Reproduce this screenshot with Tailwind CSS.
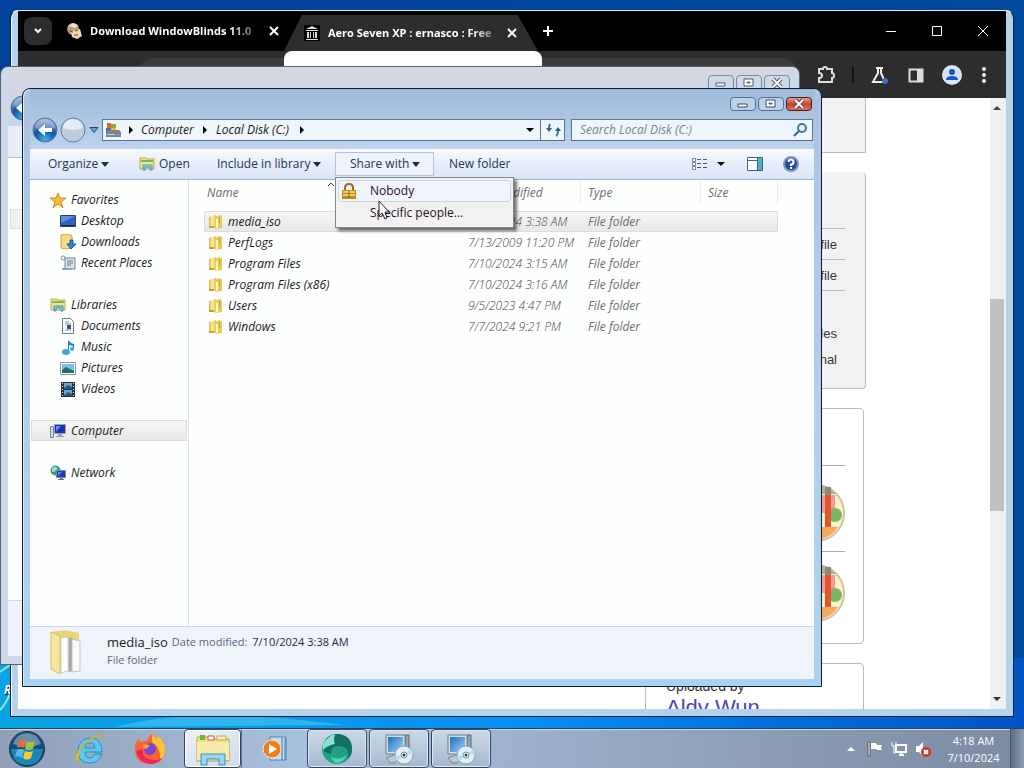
<!DOCTYPE html>
<html lang="en">
<head>
<meta charset="UTF-8">
<meta name="viewport" content="width=device-width, initial-scale=1.0">
<title>Local Disk (C:)</title>
<script src="https://cdn.jsdelivr.net/npm/@tailwindcss/browser@4"></script>
</head>
<body class="relative h-screen overflow-hidden bg-gradient-to-r from-[#00419b] to-[#00499c] font-['Open_Sans',sans-serif] text-xs text-[#1a1a1a]">

<!-- shared icons -->
<svg class="absolute size-0">
  <defs>
    <linearGradient id="fold" x1="0" x2="1"><stop offset="0" stop-color="#d9b23b"/><stop offset=".45" stop-color="#fbf0a8"/><stop offset="1" stop-color="#e2c04c"/></linearGradient>
    <linearGradient id="screen" x1="0" y1="0" x2="1" y2="1"><stop offset="0" stop-color="#1c6fc0"/><stop offset="1" stop-color="#9fd4f5"/></linearGradient>
    <radialGradient id="orb" cx=".5" cy=".9" r=".9"><stop offset="0" stop-color="#3fb4ee"/><stop offset=".5" stop-color="#16509e"/><stop offset="1" stop-color="#9bb4d4"/></radialGradient>
    <symbol id="folder" viewBox="0 0 16 16">
      <path d="M1 3l7-2v13l-7-1z" fill="url(#fold)"/>
      <path d="M7 3l4-2 3 1v12l-7 1z" fill="#e8cc5a"/>
      <path d="M8 5h2v9H8z" fill="#fdf6c6"/>
      <path d="M11 3h1v6h-1zM1 12h5v2H1z" fill="#caa02c"/>
    </symbol>
    <symbol id="library" viewBox="0 0 16 16">
      <path d="M1 2h6l1 1h7v10H1z" fill="#f3e48c" stroke="#c3ab49"/>
      <path d="M2 5h12" stroke="#7eb554" stroke-width="2"/>
      <path d="M4 14V9h9v5h-2v-3H6v3z" fill="#8fd4ee" stroke="#3f93bd"/>
    </symbol>
    <symbol id="back" viewBox="0 0 26 26">
      <circle cx="13" cy="13" r="12" fill="url(#orb)" stroke="#53708f"/>
      <path d="M3 11a10 9 0 0 1 20 0q-10 4-20 0z" fill="#fff" opacity=".3"/>
      <path d="M6 13l7-6v4h7v4h-7v4z" fill="#fff"/>
    </symbol>
    <symbol id="installer" viewBox="0 0 32 32">
      <path d="M22 2h4v20h-4z" fill="#9aa3a8" stroke="#596872"/>
      <path d="M3 2h19v19H3z" fill="#d5e0e7" stroke="#6d7d89"/>
      <path d="M5 4h15v15H5z" fill="url(#screen)"/>
      <path d="M3 25l8-3 5 2-4 6H7z" fill="#bcc7cf" stroke="#76848e"/>
      <circle cx="21" cy="22" r="9" fill="#dfeffa" stroke="#8aa5b8"/>
      <path d="M21 22l7-6a9 9 0 0 1 2 5zM21 22l-7 6a9 9 0 0 1-2-5z" fill="#b4e0f0"/>
      <circle cx="21" cy="22" r="3" fill="#fff" stroke="#78909e"/><circle cx="21" cy="22" r="1.500" fill="#333"/>
    </symbol>
    <symbol id="avatar" viewBox="1 1 58 58">
      <circle cx="30" cy="30" r="28" fill="#fdf3c0" stroke="#c9c4b0" stroke-width="2"/>
      <path d="M30 2a28 28 0 0 1 20 9H24z" fill="#a9b2a0"/>
      <path d="M34 12h15v18H34z" fill="#f49a9a"/>
      <path d="M34 44h18q-6 10-20 13z" fill="#f2a95a"/>
      <circle cx="49" cy="32" r="7" fill="#79b765"/>
      <path d="M39 4h6v8h-6z" fill="#8d8a72"/>
      <path d="M39 12h6v32h-6z" fill="#e35436"/>
    </symbol>
  </defs>
</svg>

<!-- lower part of the wallpaper -->
<div class="absolute inset-x-0 bottom-0 h-[110px] bg-gradient-to-r from-[#08a3e2] via-[#0a90f5] to-[#0352c4]"></div>
<svg class="absolute bottom-10 left-0 h-16 w-full" viewBox="0 0 1024 64" preserveAspectRatio="none"><path d="M0 8q8-6 12-8M0 46q5-5 10-16" stroke="#8fe3e8" stroke-width="2" fill="none"/><path d="M115 63q80-22 230-2" fill="#2fb4ec"/></svg>
<span class="absolute bottom-[70px] left-1 font-bold italic text-white [text-shadow:1px_1px_1px_#000]">R</span>

<!-- browser -->
<section class="absolute top-[10px] right-[10px] bottom-[51px] left-[10px] flex flex-col rounded-t-lg border border-[#07223a] border-t-[#dceaf5] bg-[#b4d2ec] px-[7px] pb-[7px] shadow-[inset_1px_0_#fff]">
  <header class="flex h-10 shrink-0 items-center bg-black text-white">
    <button aria-label="Search tabs" class="ml-1.5 grid size-7 place-items-center rounded-lg bg-[#2d2d2d]">
      <svg class="size-4" viewBox="0 0 16 16"><path d="M5 6l3 3 3-3" stroke="#fff" stroke-width="2" fill="none"/></svg>
    </button>
    <div class="ml-3.5 flex w-[218px] items-center">
      <svg class="size-4 shrink-0" viewBox="0 0 16 16"><circle cx="7" cy="6" r="6" fill="#b9997c"/><path d="M2 3l5-3 5 2-2 3z" fill="#e9e2d2"/><path d="M5 8l9-2 2 7-5 3-5-2z" fill="#f1d9ad"/><path d="M4 8l3 1M9 8l3-1M8 12h4" stroke="#684a32"/></svg>
      <span class="ml-2 w-[166px] text-[11px] font-bold whitespace-nowrap [mask-image:linear-gradient(to_right,#000_84%,#0004)]">Download WindowBlinds 11.0</span>
      <button aria-label="Close tab" class="ml-3"><svg class="size-3" viewBox="0 0 12 12"><path d="M2 2l8 8M10 2l-8 8" stroke="#fff" stroke-width="2"/></svg></button>
    </div>
    <div class="mt-1 flex h-9 w-[254px] items-center bg-[#2d2d2d] pl-5 [clip-path:polygon(7%_0,92%_0,100%_100%,0_100%)]">
      <svg class="size-4 shrink-0 bg-black" viewBox="0 0 16 16"><path d="M2 4l6-3 6 3zM2 5h12v1H2zM3 7h2v6H3zM6 7h1v6H6zM9 7h1v6H9zM11 7h2v6h-2zM2 14h12v1H2z" fill="#ddd"/></svg>
      <span class="ml-2 w-[166px] text-[11px] font-bold whitespace-nowrap [mask-image:linear-gradient(to_right,#000_88%,#0004)]">Aero Seven XP : ernasco : Free</span>
      <button aria-label="Close tab" class="ml-3"><svg class="size-3" viewBox="0 0 12 12"><path d="M2 2l8 8M10 2l-8 8" stroke="#fff" stroke-width="2"/></svg></button>
    </div>
    <button aria-label="New tab" class="ml-1"><svg class="size-3" viewBox="0 0 12 12"><path d="M6 1v10M1 6h10" stroke="#fff" stroke-width="2"/></svg></button>
    <div class="mr-[17px] ml-auto flex gap-[34px]">
      <button aria-label="Minimize"><svg class="size-3" viewBox="0 0 12 12"><path d="M1 6.500h10" stroke="#fff"/></svg></button>
      <button aria-label="Maximize"><svg class="size-3" viewBox="0 0 12 12"><path d="M1.500 1.500h9v9h-9z" stroke="#fff" fill="none"/></svg></button>
      <button aria-label="Close"><svg class="size-3" viewBox="0 0 12 12"><path d="M1 1l10 10M11 1L1 11" stroke="#fff"/></svg></button>
    </div>
  </header>
  <div class="relative flex h-[47px] shrink-0 items-center justify-end bg-[#2d2d2d] pr-3">
    <div class="absolute top-[7px] left-[120px] h-8 w-[660px] rounded-full bg-[#3c3c3c]"></div>
    <div class="absolute top-0 left-[266px] h-10 w-[258px] rounded-t-lg bg-white"></div>
    <div class="flex items-center">
      <button aria-label="Extensions"><svg class="size-5" viewBox="0 0 20 20"><path d="M3 4h4q0-2 2-2t2 2h5v4q2 0 2 2.500T16 13v4H3v-4q3 0 3-2.500T3 8z" stroke="#ddd" stroke-width="2" fill="none"/></svg></button>
      <span class="mx-4 h-4 w-0.5 bg-[#111]"></span>
      <button aria-label="Experiments" class="mr-4"><svg class="size-5" viewBox="0 0 20 20"><path d="M6 3h7M8 3v5l-5 9h12l-4-9V3" stroke="#eee" stroke-width="2" fill="none"/><circle cx="15" cy="16" r="3" fill="#3f6fc4"/></svg></button>
      <button aria-label="Side panel" class="mr-4"><svg class="size-5" viewBox="0 0 20 20"><path d="M3.500 4.500h13v12h-13z" stroke="#ddd" stroke-width="2" fill="none"/><path d="M11 4h6v13h-6z" fill="#ddd"/></svg></button>
      <button aria-label="Profile" class="mr-3"><svg class="size-5" viewBox="0 0 20 20"><circle cx="10" cy="10" r="10" fill="#d6e4fc"/><circle cx="10" cy="7" r="3" fill="#1a56c8"/><path d="M4 15q0-4 6-4t6 4z" fill="#1a56c8"/></svg></button>
      <button aria-label="Menu"><svg class="h-5 w-5" viewBox="0 0 20 20"><circle cx="10" cy="4" r="2" fill="#eee"/><circle cx="10" cy="10" r="2" fill="#eee"/><circle cx="10" cy="16" r="2" fill="#eee"/></svg></button>
    </div>
  </div>
  <main class="flex min-h-0 flex-1 overflow-hidden bg-white font-['Liberation_Sans',sans-serif] text-[13px] text-[#333]">
    <div class="mr-[124px] ml-auto flex w-[221px] flex-col gap-[19px]">
      <div class="h-[55px] shrink-0 border-r border-b border-[#bbb] bg-[#f2f2f2]"></div>
      <div class="h-[217px] shrink-0 rounded border-r border-b border-[#bbb] bg-[#f2f2f2] px-5 pt-14 text-right">
        <p class="h-[31px] border-t border-[#bbb] pr-2 leading-8">1 file</p>
        <p class="h-[31px] border-t border-[#bbb] pr-2 leading-8">1 file</p>
        <p class="border-t border-[#bbb] pt-[30px] pr-2 leading-[26px]">7 Files</p>
        <p class="pr-2 leading-[26px]">6 Original</p>
      </div>
      <div class="mr-0.5 h-[236px] shrink-0 rounded border border-[#bbb] pr-[18px] pl-5 pt-14">
        <div class="border-t border-[#aaa] pt-[18px] pb-[9px]"><svg class="ml-auto size-[58px]"><use href="#avatar"/></svg></div>
        <div class="border-t border-[#aaa] pt-3"><svg class="ml-auto size-[58px]"><use href="#avatar"/></svg></div>
      </div>
      <div class="mr-0.5 flex-1 rounded-t border border-[#bbb] px-5 pt-3">
        <p class="text-sm leading-5">Uploaded by</p>
        <a href="#" class="block text-[22px] leading-6 text-[#4b45b5]">Aldy Wun</a>
      </div>
    </div>
    <div class="flex w-4 flex-col items-center bg-[#f0f0f0] pr-0.5">
      <svg class="my-1 size-3" viewBox="0 0 12 12"><path d="M2 8h8L6 4z" fill="#444"/></svg>
      <div class="mt-[181px] h-[212px] w-3.5 bg-[#c0c0c0]"></div>
      <svg class="mt-auto mb-1 size-3" viewBox="0 0 12 12"><path d="M2 4h8L6 8z" fill="#333"/></svg>
    </div>
  </main>
</section>

<!-- explorer window in the back -->
<section class="absolute top-[66px] left-0 flex h-[599px] w-[800px] flex-col rounded-t-lg border border-[#56616e] bg-gradient-to-r from-[#ccd9e8] to-[#c9d9ea] px-[7px] pb-2">
  <header class="h-[59px] shrink-0 bg-gradient-to-b from-[#d7d6e0] to-[#c6d8ea]">
    <div class="flex justify-end gap-0.5 pt-2 pr-0.5">
      <button aria-label="Minimize" class="grid h-4 w-[26px] place-items-center rounded-sm border border-[#7c8998] bg-[#cbdaea]"><svg class="h-3 w-4" viewBox="0 0 16 12"><path d="M3 6h9v3H3z" fill="#fff" stroke="#4c5868"/></svg></button>
      <button aria-label="Maximize" class="grid h-4 w-[26px] place-items-center rounded-sm border border-[#7c8998] bg-[#cbdaea]"><svg class="h-3 w-4" viewBox="0 0 16 12"><path d="M3 2h9v7H3zM6 5h3v1H6z" fill="#fff" stroke="#4c5868"/></svg></button>
      <button aria-label="Close" class="grid h-4 w-[26px] place-items-center rounded-sm border border-[#7c8998] bg-[#cbdaea]"><svg class="h-3 w-4" viewBox="0 0 16 12"><path d="M4 2l8 8M12 2l-8 8" stroke="#4c5868" stroke-width="4"/><path d="M4 2l8 8M12 2l-8 8" stroke="#fff" stroke-width="2"/></svg></button>
    </div>
    <svg class="mt-1 ml-0.5 size-[26px]"><use href="#back"/></svg>
  </header>
  <div class="h-8 shrink-0 border-b border-[#b4bfcc] bg-[#e8eef8]"></div>
  <div class="flex-1 bg-white pt-[51px]"><div class="ml-0.5 h-5 border border-[#ddd] bg-[#f1f1f1]"></div></div>
  <div class="h-14 shrink-0 border-t border-[#ccd6e4] bg-[#eef2fb]"></div>
</section>

<!-- explorer window -->
<section class="absolute top-[88px] left-[22px] flex h-[599px] w-[800px] flex-col rounded-t-lg border border-[#0b1c2c] bg-gradient-to-b from-[#a9c3e0] via-[#b5cdea] to-[#a9d2f0] px-[7px] pb-[7px] shadow-[inset_1px_1px_#dcebf8]">
  <header class="shrink-0 bg-gradient-to-b from-[#9dbad8] to-[#bdd2ec] pt-2">
    <div class="flex justify-end gap-0.5 pr-0.5">
      <button aria-label="Minimize" class="grid h-3.5 w-[26px] place-items-center rounded-sm border border-[#53708f] bg-[#bcd1e8]"><svg class="h-3 w-4" viewBox="0 0 16 12"><path d="M3 6h9v3H3z" fill="#fff" stroke="#3c4c60"/></svg></button>
      <button aria-label="Maximize" class="grid h-3.5 w-[26px] place-items-center rounded-sm border border-[#53708f] bg-[#bcd1e8]"><svg class="h-3 w-4" viewBox="0 0 16 12"><path d="M3 2h9v7H3zM6 5h3v1H6z" fill="#fff" stroke="#3c4c60"/></svg></button>
      <button aria-label="Close" class="grid h-3.5 w-[26px] place-items-center rounded-sm border border-[#4c1a18] bg-gradient-to-b from-[#e3a191] via-[#c9402a] to-[#dd7359]"><svg class="h-3 w-4" viewBox="0 0 16 12"><path d="M4 2l8 8M12 2l-8 8" stroke="#5b4444" stroke-width="4"/><path d="M4 2l8 8M12 2l-8 8" stroke="#fff" stroke-width="2"/></svg></button>
    </div>
    <div class="flex h-[38px] items-center pr-px pl-0.5">
      <button aria-label="Back"><svg class="size-[26px]"><use href="#back"/></svg></button>
      <button aria-label="Forward" class="ml-0.5"><svg class="size-[26px]" viewBox="0 0 26 26"><circle cx="13" cy="13" r="12" fill="#bccde0" stroke="#667f9d"/><path d="M3 11a10 9 0 0 1 20 0q-10 4-20 0z" fill="#e4edf6"/></svg></button>
      <button aria-label="Recent pages" class="ml-0.5"><svg class="h-2 w-3" viewBox="0 0 12 8"><path d="M2 1.500h8L6 6.500z" fill="#6fa7c8" stroke="#1c4a72"/></svg></button>
      <div class="ml-0.5 flex h-[22px] w-[463px] items-center border border-[#5b7590] bg-[#eef5fb] italic">
        <svg class="ml-0.5 size-4" viewBox="0 0 16 16"><path d="M2 1h4v5H2z" fill="#e2612e"/><path d="M6 2h5v5H6z" fill="#88b440"/><path d="M1 6h5v4H1z" fill="#3973c4"/><path d="M6 6h5v4H6z" fill="#eebd31"/><path d="M1 10l2-2h11l2 2v5H1z" fill="#7b8894"/><path d="M2 12h8v1H2z" fill="#cfd8df"/><path d="M12 12h2v1h-2z" fill="#61d43c"/></svg>
        <svg class="mx-1 size-3" viewBox="0 0 12 12"><path d="M4 2l4 4-4 4z"/></svg>
        <a href="#" class="w-[54px]">Computer</a>
        <svg class="mx-1 size-3" viewBox="0 0 12 12"><path d="M4 2l4 4-4 4z"/></svg>
        <a href="#" class="ml-px w-20">Local Disk (C:)</a>
        <svg class="size-3" viewBox="0 0 12 12"><path d="M4 2l4 4-4 4z"/></svg>
        <button aria-label="Previous locations" class="mr-1 ml-auto"><svg class="size-3" viewBox="0 0 12 12"><path d="M2 4h8L6 8z"/></svg></button>
        <button aria-label="Refresh" class="grid h-full w-6 place-items-center border-l border-[#5b7590]"><svg class="size-4" viewBox="0 0 16 16"><path d="M5 2q-1 2-1 5M11 14q2-1 2-6" stroke="#2f7f9e" stroke-width="2" fill="none"/><path d="M1 6h6L4 10zM10 9h6l-3-4z" fill="#2b6292"/></svg></button>
      </div>
      <div class="ml-1.5 flex h-[22px] min-w-0 flex-1 items-center border border-[#5b7590] bg-[#eef5fb] pr-1 pl-2">
        <input type="text" aria-label="Search" placeholder="Search Local Disk (C:)" class="min-w-0 flex-1 italic outline-none placeholder:text-[#7b838c]">
        <svg class="size-4" viewBox="0 0 16 16"><circle cx="10" cy="6" r="4" stroke="#3d7aa8" stroke-width="2" fill="#e3f3fb"/><path d="M7 9l-5 5" stroke="#35648f" stroke-width="2"/></svg>
      </div>
    </div>
  </header>

  <nav class="relative flex h-[31px] shrink-0 items-center border-b border-[#9fb3ce] bg-gradient-to-b from-[#f8fafe] via-[#e6eefb] to-[#d9e5f7] text-[#26364c]">
    <button class="ml-[18px] flex w-[91px] items-center">Organize<svg class="ml-px size-3" viewBox="0 0 12 12"><path d="M2 4h8L6 9z" fill="#222c3a"/></svg></button>
    <button class="flex w-[78px] items-center"><svg class="mr-1 size-4"><use href="#library"/></svg>Open</button>
    <button class="flex w-[118px] items-center whitespace-nowrap">Include in library<svg class="ml-px size-3" viewBox="0 0 12 12"><path d="M2 4h8L6 9z" fill="#222c3a"/></svg></button>
    <button class="flex h-6 w-[99px] items-center border border-[#b3c4de] bg-[#edf2fb] pl-3.5">Share with<svg class="ml-px size-3" viewBox="0 0 12 12"><path d="M2 4h8L6 9z" fill="#222c3a"/></svg></button>
    <button class="ml-[15px]">New folder</button>
    <button aria-label="Views" class="ml-auto flex items-center"><svg class="size-4" viewBox="0 0 16 16"><path d="M1.500 2.500h3v3h-3zM1.500 6.500h3v3h-3zM1.500 10.500h3v3h-3z" fill="#fff" stroke="#75869b"/><path d="M6 3.500h4M12 3.500h4M6 7.500h4M12 7.500h4M6 11.500h4M12 11.500h4" stroke="#4d6079"/></svg><svg class="ml-2 size-3" viewBox="0 0 12 12"><path d="M2 4h8L6 8z" fill="#111"/></svg></button>
    <button aria-label="Preview pane" class="ml-5"><svg class="size-4" viewBox="0 0 16 16"><path d="M.5 1.500h15v13H.5z" fill="#fff" stroke="#44648a"/><path d="M10 2h5v12h-5z" fill="#49b3bd"/><path d="M1 4.500h9M10.500 2v12" stroke="#44648a"/></svg></button>
    <button aria-label="Help" class="mr-[15px] ml-5"><svg class="size-4" viewBox="0 0 16 16"><circle cx="8" cy="8" r="7" fill="#2448a8" stroke="#7f93b4" stroke-width="2"/><path d="M5.500 6q0-2.500 2.500-2.500T10.500 6 8 8.500V10M8 11v2" stroke="#fff" stroke-width="2" fill="none"/></svg></button>

    <!-- share menu -->
    <div class="absolute top-7 left-[305px] z-10 w-[179px] border border-[#7c8794] bg-[#f1f1f1] p-0.5 pb-[3px] text-[#2a1028] shadow-[3px_3px_3px_rgba(0,0,0,.55)]">
      <button class="flex h-[22px] w-full items-center rounded-sm border border-[#c3d6f0] bg-[#f1f5fb] pl-0.5"><svg class="mr-[13px] size-4" viewBox="0 0 16 16"><path d="M4 8V5q0-4 4-4t4 4v3" stroke="#9b6c16" stroke-width="2" fill="none"/><path d="M1 7h14v9H1z" fill="#c28a1b"/><path d="M2 9h12M2 12h12" stroke="#f2cf5b" stroke-width="2"/><path d="M8 8v7" stroke="#8b5a10"/></svg>Nobody</button>
      <button class="flex h-[22px] w-full items-center pl-8">Specific people...</button>
    </div>
    <svg class="absolute top-[51px] left-[348px] z-20 h-5 w-3" viewBox="0 0 12 20"><path d="M1 1v15l3-3 3 6 2-1-2-6h4z" fill="#fff" stroke="#222"/></svg>
  </nav>

  <div class="flex min-h-0 flex-1 bg-[#fdfefe] italic">
    <aside class="w-[159px] shrink-0 border-r border-[#d9e3ef] pt-[9px] [&_a]:flex [&_a]:h-[21px] [&_a]:items-center [&_a]:gap-[5px] [&_svg]:size-4">
      <a href="#" class="pl-5"><svg viewBox="0 0 16 16"><path d="M8 1l2 5h6l-5 4 2 6-5-4-5 4 2-6-5-4h6z" fill="#f6bd3b" stroke="#d28a22"/></svg>Favorites</a>
      <a href="#" class="pl-[30px]"><svg viewBox="0 0 16 16"><path d="M.5 2.500h15v11H.5z" fill="#2c63c4" stroke="#31405c"/><path d="M1 3h14L1 10z" fill="#5b8fe0"/><path d="M1 12h14v1H1z" fill="#16264b"/></svg>Desktop</a>
      <a href="#" class="pl-[30px]"><svg viewBox="0 0 16 16"><path d="M1 1l7-1 4 2v12l-5 1-6-1z" fill="#f3dd87" stroke="#cba63e"/><path d="M10 6h3v4h3l-5 5-4-5h3z" fill="#2d88d8" stroke="#14599f"/></svg>Downloads</a>
      <a href="#" class="pl-[30px]"><svg viewBox="0 0 16 16"><path d="M5 3h10v11H5z" fill="#dbe4e9" stroke="#73858e"/><path d="M7 6h6M7 8h6M7 10h4" stroke="#62808e"/><circle cx="3" cy="3" r="2" fill="#fff" stroke="#7d8f98"/><path d="M2 13h10v2H2z" fill="#7fa9b8"/></svg>Recent Places</a>
      <a href="#" class="mt-[21px] pl-5"><svg><use href="#library"/></svg>Libraries</a>
      <a href="#" class="pl-[30px]"><svg viewBox="0 0 16 16"><path d="M2.500.5h8l3 3v12h-11z" fill="#fff" stroke="#697b88"/><path d="M5 4h4M5 6h6M5 12h6" stroke="#7c93a5"/><path d="M7 7h4v4H7z" fill="#31567c"/></svg>Documents</a>
      <a href="#" class="pl-[30px]"><svg viewBox="0 0 16 16"><path d="M8 1q2 3 6 4v5h-1V7L9 6v6H8z" fill="#1b84bf"/><ellipse cx="6" cy="13" rx="4" ry="3" fill="#37a9dc"/><ellipse cx="12" cy="10" rx="2" ry="2" fill="#37a9dc"/></svg>Music</a>
      <a href="#" class="pl-[30px]"><svg viewBox="0 0 16 16"><path d="M.5 2.500h15v12H.5z" fill="#fff" stroke="#8393a0"/><path d="M2 4h12v9H2z" fill="#79c2dc"/><path d="M2 10l4-3 8 4v2H2z" fill="#246d6b"/></svg>Pictures</a>
      <a href="#" class="pl-[30px]"><svg viewBox="0 0 16 16"><path d="M1 1h14v15H1z" fill="#26333f"/><path d="M4 2h8v6H4zM4 9h8v6H4z" fill="#6ba5cb"/><path d="M4 7l4-3 4 2v2H4zM4 14l4-3 4 2v2H4z" fill="#2a5580"/><path d="M2.500 2v14M13.500 2v14" stroke="#d3dde5" stroke-dasharray="1 2"/></svg>Videos</a>
      <a href="#" class="mt-[21px] mr-px ml-px border border-[#dcdcdc] bg-gradient-to-b from-[#f7f7f7] to-[#e6e6e6] pl-[18px]"><svg viewBox="0 0 16 16"><path d="M.5 3.500h3v11h-3z" fill="#d5dade" stroke="#7a858e"/><path d="M4.500 1.500h11v9h-11z" fill="#1931b4" stroke="#9aa4ad"/><path d="M6 3h5l-5 6z" fill="#5c86ea"/><path d="M8 11h4v2h2v1H6v-1h2z" fill="#98a3ab"/></svg>Computer</a>
      <a href="#" class="mt-[21px] pl-5"><svg viewBox="0 0 16 16"><circle cx="5.500" cy="5.500" r="5" fill="#2f9c84"/><path d="M2 3q4-3 5 0T2 7z" fill="#9be0c6"/><path d="M6.500 5.500h9v7h-9z" fill="#1b36bb" stroke="#7d8ba4"/><path d="M8 7h4l-4 4z" fill="#5b86ea"/><path d="M10 13h3v1h1v1H8v-1h2z" fill="#697a8b"/></svg>Network</a>
    </aside>
    <div class="relative flex-1 pl-[15px]">
      <svg class="absolute top-0 left-[138px] h-2 w-2" viewBox="0 0 8 8"><path d="M1 6l3-3 3 3" stroke="#444" fill="none"/></svg>
      <table class="w-[574px] table-fixed border-separate border-spacing-0 text-left whitespace-nowrap text-[#6d6d6d]">
        <thead>
          <tr class="h-[25px] [&>th]:border-r [&>th]:border-[#e6edf4] [&>th]:p-0 [&>th]:font-normal">
            <th class="w-[257px]"><span class="pl-[3px]">Name</span></th>
            <th class="w-[120px] pl-[7px]!">Date modified</th>
            <th class="w-[120px] pl-[7px]!">Type</th>
            <th class="pl-[7px]!">Size</th>
          </tr>
          <tr class="h-[6px]"></tr>
        </thead>
        <tbody class="[&_td]:h-[21px] [&_td]:p-0 [&_td:first-child]:text-[#1a1a1a] [&_td:nth-child(2)]:pl-[7px] [&_td:nth-child(2)]:font-light [&_td:nth-child(2)]:text-[#444] [&_td:nth-child(3)]:pl-[7px]">
          <tr class="bg-gradient-to-b from-[#f7f7f7] to-[#e7e7e7] outline outline-[#dcdcdc] -outline-offset-1">
            <td><span class="flex items-center gap-1 pl-1"><svg class="size-4"><use href="#folder"/></svg>media_iso</span></td><td>7/10/2024 3:38 AM</td><td>File folder</td><td></td>
          </tr>
          <tr><td><span class="flex items-center gap-1 pl-1"><svg class="size-4"><use href="#folder"/></svg>PerfLogs</span></td><td>7/13/2009 11:20 PM</td><td>File folder</td><td></td></tr>
          <tr><td><span class="flex items-center gap-1 pl-1"><svg class="size-4"><use href="#folder"/></svg>Program Files</span></td><td>7/10/2024 3:15 AM</td><td>File folder</td><td></td></tr>
          <tr><td><span class="flex items-center gap-1 pl-1"><svg class="size-4"><use href="#folder"/></svg>Program Files (x86)</span></td><td>7/10/2024 3:16 AM</td><td>File folder</td><td></td></tr>
          <tr><td><span class="flex items-center gap-1 pl-1"><svg class="size-4"><use href="#folder"/></svg>Users</span></td><td>9/5/2023 4:47 PM</td><td>File folder</td><td></td></tr>
          <tr><td><span class="flex items-center gap-1 pl-1"><svg class="size-4"><use href="#folder"/></svg>Windows</span></td><td>7/7/2024 9:21 PM</td><td>File folder</td><td></td></tr>
        </tbody>
      </table>
    </div>
  </div>

  <footer class="flex h-[53px] shrink-0 border-t border-[#c9d6e5] bg-[#eff4fa] pl-5">
    <svg class="mt-0.5 h-12 w-9" viewBox="0 0 36 48"><path d="M1 3l14-2 14 3v37l-21 3-7-4z" fill="#e9d57a"/><path d="M1 3l9 4v38l-9-5z" fill="#f5e7a0" stroke="#d4bc5e"/><path d="M11 9l7-1v34l-7 2z" fill="#fff" stroke="#ccc"/><path d="M19 8l4 2v32l-4 1z" fill="#a3a7aa"/><path d="M22 10l8 2v30l-8 1z" fill="#fafafa" stroke="#c4c4c4"/></svg>
    <dl class="pt-1.5 pl-[21px] text-[11px] leading-[18px] text-[#5a6779]">
      <div class="flex"><dt class="mr-1 text-[13px] text-[#1a1a1a]">media_iso</dt><dd>Date modified: <span class="ml-0.5 text-[#1e2a3c]">7/10/2024 3:38 AM</span></dd></div>
      <div>File folder</div>
    </dl>
  </footer>
</section>

<!-- taskbar -->
<footer class="absolute inset-x-0 bottom-0 flex h-10 items-center border-t border-[#26435f] bg-gradient-to-r from-[#8f9fb6] via-[#a9c1de] via-30% to-[#7b8ba0] shadow-[inset_0_1px_#c8d8e8]">
  <button aria-label="Start" class="ml-2"><svg class="size-[38px]" viewBox="0 0 38 38"><circle cx="19" cy="19" r="17.500" fill="#1b4a78" stroke="#20384f"/><path d="M3 19h32q-2 16-16 16T3 19z" fill="#1787b4"/><path d="M5 14q4-11 14-11t14 11q-14 6-28 0z" fill="#9fbad0" opacity=".6"/><path d="M11 11q4-3 7-1l-2 8q-4-2-7 0z" fill="#ea6b2f"/><path d="M19 11q4 2 8 0l-2 8q-4 2-8 0z" fill="#9ac63c"/><path d="M9 20q4-2 7 0l-2 8q-4-3-7-1z" fill="#58b4ea"/><path d="M17 21q4 2 8 0l-2 7q-4 3-8 0z" fill="#fbc936"/></svg></button>
  <button aria-label="Internet Explorer" class="ml-3 grid w-[62px] place-items-center"><svg class="size-8" viewBox="0 0 32 32"><path d="M29 21q-3 9-12 9Q5 30 5 18T17 5q12 0 12 14H12q0 6 5 6 3 0 5-4zM12 15h10q0-5-5-5t-5 5z" fill="#5cc8f2" stroke="#2a8cc4"/><path d="M5 30Q-1 24 10 12T31 3q-9-1-18 7T5 30z" fill="#f4cd35" stroke="#d9a91b"/></svg></button>
  <button aria-label="Firefox" class="grid w-[60px] place-items-center"><svg class="size-8" viewBox="0 0 32 32"><path d="M16 31Q1 31 1 16 1 9 5 5q0 3 2 4 3-2 6-1 2-6 7-8-1 4 3 6 1-2 0-4 8 6 8 14 0 15-15 15z" fill="#f9632f"/><path d="M20 0q-1 4 3 6 1-2 0-4 8 6 8 14 0 8-5 11 1-13-8-18-1-6 2-9z" fill="#fdc43a"/><path d="M2 18q3 12 14 13 8 0 12-6-10 5-17-1-3-3-2-8z" fill="#ee2560"/><circle cx="16" cy="16" r="6" fill="#7745d8"/><path d="M9 12q5-2 7 1l-4 3q-3 0-3-4z" fill="#ff9b34"/></svg></button>
  <button aria-label="Windows Explorer" class="ml-1 grid h-full w-[57px] place-items-center rounded-sm border border-[#33475c] bg-gradient-to-br from-[#eef3f6] to-[#cfdbe6] shadow-[inset_0_0_0_1px_#fff]"><svg class="size-9" viewBox="0 0 36 36"><path d="M2 6h13l2 2h17v22H2z" fill="#f1df88" stroke="#b9a04b"/><path d="M5 4h5v5H5z" fill="#76ae49"/><path d="M13 5h6v4h-6z" fill="#fff" stroke="#c65f43"/><path d="M22 5h9v4h-9z" fill="#f7eec0" stroke="#c0a858"/><path d="M2 11h32v18H2z" fill="#f8ebaa"/><path d="M6 34V23h24v11h-6v-6H12v6z" fill="#9cd3f2" stroke="#3d8fbd"/></svg></button>
  <button aria-label="Media Player" class="grid h-full w-[66px] place-items-center border-l border-[#33475c]/60"><svg class="size-7" viewBox="0 0 28 28"><path d="M9 2h16v23H9z" fill="#c4dcf1" stroke="#4b86ba"/><path d="M21 3v22M24 3v22" stroke="#3e7ab0"/><circle cx="11" cy="14" r="9" fill="#ee7f1c" stroke="#fbe3c4"/><path d="M8 9l8 5-8 5z" fill="#fff"/></svg></button>
  <button aria-label="Edge" class="grid h-full w-[60px] place-items-center rounded-sm border border-[#33475c] bg-gradient-to-b from-[#cdd9e5] to-[#a4b9cf] shadow-[inset_0_0_0_1px_#dbe7f2]"><svg class="size-8" viewBox="0 0 32 32"><circle cx="16" cy="16" r="15" fill="#1f9f83"/><path d="M2 11Q7 0 18 1q13 2 13 15 0 6-4 10 2-12-8-13-9-1-9 8Q0 19 2 11z" fill="#14705f"/><path d="M6 6q6-6 8-4-2 4 0 9-7 1-12 6Q0 10 6 6z" fill="#8ce3cb"/><path d="M10 24q8 4 16-2-4 8-11 8-4-2-5-6z" fill="#55d3b0"/></svg></button>
  <button aria-label="Setup 1" class="ml-0.5 grid h-full w-[60px] place-items-center rounded-sm border border-[#33475c] bg-gradient-to-b from-[#cdd9e5] to-[#a4b9cf] shadow-[inset_0_0_0_1px_#dbe7f2]"><svg class="size-8"><use href="#installer"/></svg></button>
  <button aria-label="Setup 2" class="ml-0.5 grid h-full w-[60px] place-items-center rounded-sm border border-[#33475c] bg-gradient-to-b from-[#cdd9e5] to-[#a4b9cf] shadow-[inset_0_0_0_1px_#dbe7f2]"><svg class="size-8"><use href="#installer"/></svg></button>
  <div class="ml-auto flex h-full items-center text-white">
    <button aria-label="Show hidden icons"><svg class="size-3" viewBox="0 0 12 12"><path d="M2 8h8L6 4z" fill="#fff"/></svg></button>
    <svg class="ml-2.5 size-4" viewBox="0 0 16 16"><path d="M1 1h2v14H1z" fill="#fff" stroke="#556"/><path d="M4 2h5l1 2h5l-1 3 1 2h-5L9 8H4z" fill="#fff"/></svg>
    <svg class="ml-2 size-4" viewBox="0 0 16 16"><path d="M5 4h10v7H5zM8 14h5M10 11v3" stroke="#fff" stroke-width="2" fill="none"/><path d="M1 1v4h4V1M3 5v8" stroke="#fff" fill="none"/></svg>
    <svg class="ml-2 size-4" viewBox="0 0 16 16"><path d="M1 5h3l4-4v14l-4-4H1z" fill="#fff"/><circle cx="11" cy="11" r="5" fill="#d2302c"/><path d="M9 9l4 4M13 9l-4 4" stroke="#fff" stroke-width="2"/></svg>
    <div class="ml-3.5 w-[57px] text-center text-[11px] leading-[17px]">4:18 AM<br>7/10/2024</div>
    <button aria-label="Show desktop" class="ml-2 h-full w-3.5 border-l border-[#46566a] bg-gradient-to-r from-[#5f6f83] to-[#8c9cb0]"></button>
  </div>
</footer>
</body>
</html>
